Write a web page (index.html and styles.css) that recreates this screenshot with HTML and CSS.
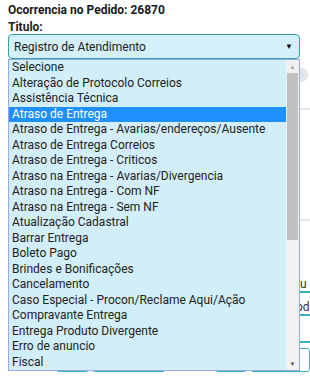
FILE: index.html
```html
<!DOCTYPE html>
<html lang="pt-br">
<head>
    <meta charset="UTF-8">
    <meta name="viewport" content="width=device-width, initial-scale=1.0">
    <title>Ocorrencia</title>
    <link rel="stylesheet" href="styles.css">
</head>
<body>
    <div class="pagina">
        <h1 class="pedido">Ocorrencia no Pedido: 26870</h1>
        <label class="rotulo">Titulo:</label>
        <div class="campo">
            <div class="select">
                <span>Registro de Atendimento</span>
                <span class="seta">&#9660;</span>
            </div>

            <!-- lista aberta do select -->
            <div class="lista">
                <ul class="opcoes">
                    <li>Selecione</li>
                    <li>Alteração de Protocolo Correios</li>
                    <li>Assistência Técnica</li>
                    <li class="ativo">Atraso de Entrega</li>
                    <li>Atraso de Entrega - Avarias/endereços/Ausente</li>
                    <li>Atraso de Entrega Correios</li>
                    <li>Atraso de Entrega - Criticos</li>
                    <li>Atraso na Entrega - Avarias/Divergencia</li>
                    <li>Atraso na Entrega - Com NF</li>
                    <li>Atraso na Entrega - Sem NF</li>
                    <li>Atualização Cadastral</li>
                    <li>Barrar Entrega</li>
                    <li>Boleto Pago</li>
                    <li>Brindes e Bonificações</li>
                    <li>Cancelamento</li>
                    <li>Caso Especial - Procon/Reclame Aqui/Ação</li>
                    <li>Compravante Entrega</li>
                    <li>Entrega Produto Divergente</li>
                    <li>Erro de anuncio</li>
                    <li>Fiscal</li>
                </ul>
                <div class="rolagem">
                    <span class="seta-rolagem">&#9650;</span>
                    <div class="trilho"><div class="barra"></div></div>
                    <span class="seta-rolagem">&#9660;</span>
                </div>
            </div>
        </div>

        <!-- conteudo atras da lista -->
        <div class="fundo">
            <div class="radio"></div>
            <hr class="linha-cinza primeira">
            <hr class="linha-cinza segunda">
            <div class="campo-fundo um">lu</div>
            <div class="campo-fundo dois">od</div>
            <div class="campo-fundo vazio"></div>
            <div class="botoes">
                <span class="botao b1"></span>
                <span class="botao b2"></span>
                <span class="botao b3"></span>
                <span class="botao b4"></span>
            </div>
        </div>
    </div>
</body>
</html>
```

FILE: styles.css
```css
body {
    margin: 0;
    background-color: #fff;
    font-family: Roboto, "Liberation Sans", Arial, sans-serif;
    color: #222;
}

.pagina {
    padding: 3px 10px 10px 8px;
}

.pedido {
    margin: 0;
    font-size: 12px;
    font-weight: bold;
    line-height: 14px;
    color: #1a1a1a;
}

.rotulo {
    display: block;
    margin-top: 3px;
    font-size: 12px;
    font-weight: bold;
    line-height: 14px;
}

.campo {
    position: relative;
}

.select {
    display: flex;
    align-items: center;
    justify-content: space-between;
    height: 23px;
    padding: 0 6px 0 5px;
    border: 1px solid #3a9ea3;
    border-radius: 4px;
    background-color: #d3eff8;
    font-size: 12px;
    color: #222;
}

.seta {
    font-size: 8px;
    color: #111;
}

.lista {
    position: absolute;
    top: 25px;
    left: 0;
    right: 0;
    height: 310px;
    display: flex;
    border: 1px solid #9aaae6;
    background-color: #d2eff9;
    z-index: 2;
}

.opcoes {
    flex: 1;
    margin: 0;
    padding: 0;
    list-style: none;
    font-size: 12px;
    color: #222;
}

.opcoes li {
    height: 15.5px;
    line-height: 15.5px;
    padding-left: 3px;
    white-space: nowrap;
    overflow: hidden;
}

.opcoes li.ativo {
    background-color: #1e90ff;
    color: #fff;
}

.rolagem {
    width: 13px;
    display: flex;
    flex-direction: column;
    background-color: #f1f1f1;
}

.seta-rolagem {
    height: 13px;
    line-height: 13px;
    text-align: center;
    font-size: 6px;
    color: #a3a3a3;
}

.seta-rolagem:last-child {
    color: #505050;
}

.trilho {
    flex: 1;
    padding: 0 1px;
}

.barra {
    height: 167px;
    background-color: #c1c1c1;
}

/* elementos atras da lista */
.fundo {
    margin-right: -10px;
}

.radio {
    width: 14px;
    height: 14px;
    margin: 9px 2px 0 auto;
    border-radius: 50%;
    background-color: #e4e4e4;
}

.linha-cinza {
    margin: 0;
    border: none;
    border-top: 2px solid #e6e6e6;
}

.primeira {
    margin-top: 26px;
}

.segunda {
    margin-top: 109px;
}

.campo-fundo {
    height: 18px;
    margin-left: 200px;
    padding-left: 89px;
    border-bottom: 2px solid #36b3bf;
    font-size: 12px;
    line-height: 22px;
    color: #333;
    white-space: nowrap;
}

.dois {
    padding-left: 88px;
}

.um {
    margin-top: 52px;
}

.dois {
    margin-top: 3px;
}

.vazio {
    margin-top: 7px;
}

.botoes {
    display: flex;
    margin-top: 5px;
    margin-left: 48px;
    gap: 3px;
}

.botao {
    height: 22px;
    border: 1px solid #36b3bf;
    border-radius: 3px;
}

.b1 { width: 32px; }
.b2 { width: 75px; }
.b3 { width: 32px; margin-left: 46px; }
.b4 { width: 60px; }
```
